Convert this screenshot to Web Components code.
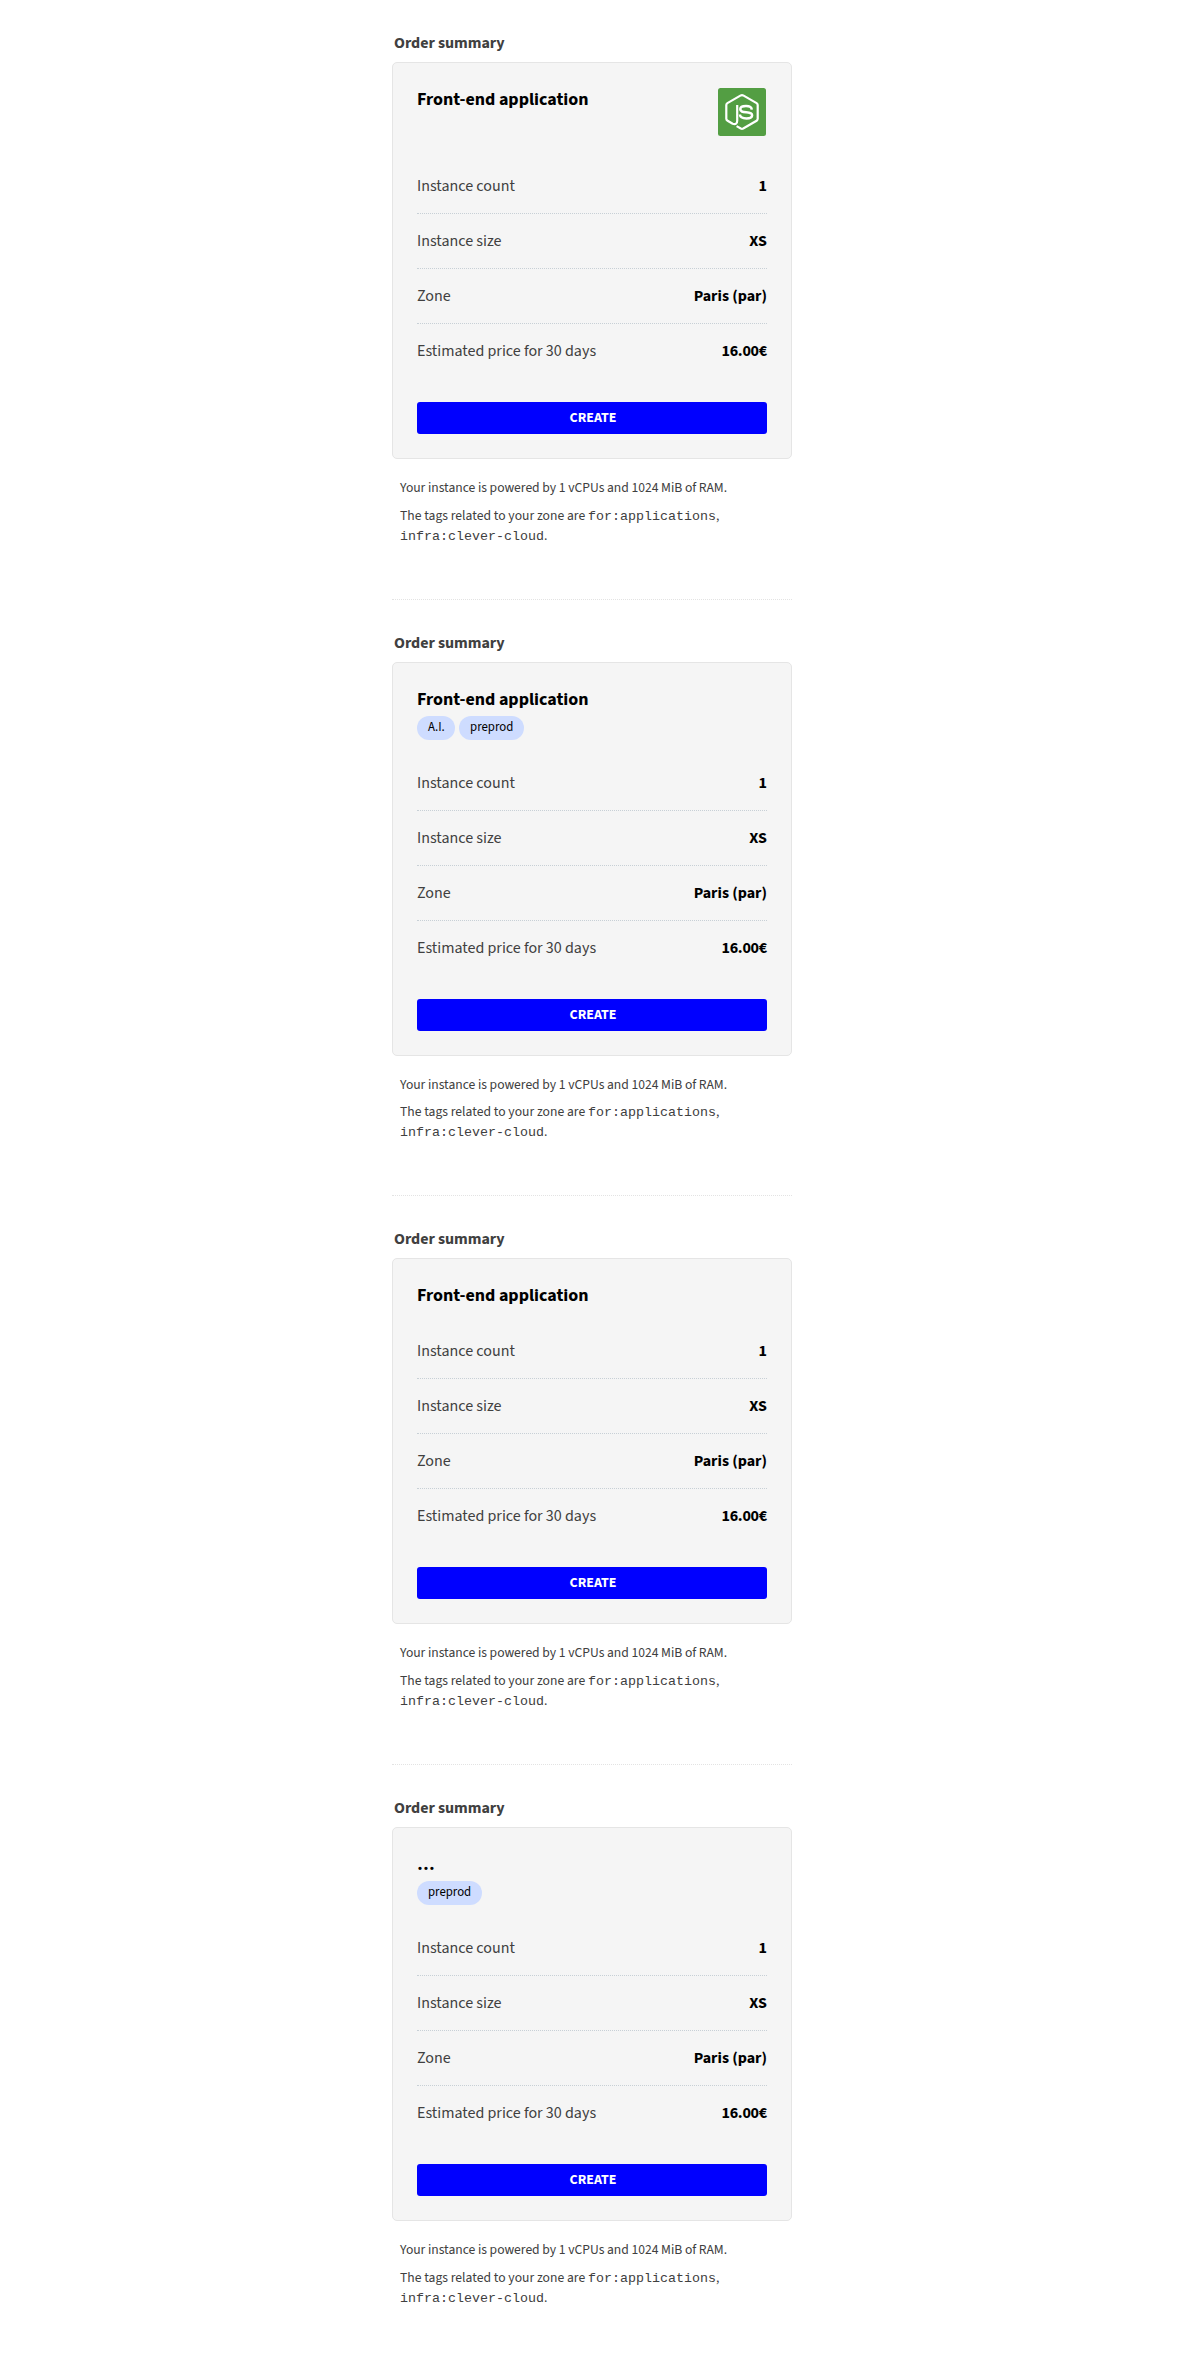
<!DOCTYPE html>
<html lang="en">
<head>
<meta charset="utf-8">
<title>Order summary</title>
<style>
body{margin:0;background:#fff;font-family:"Source Sans 3","Noto Sans CJK SC",sans-serif;color:#404040;font-size:16px}
main{display:block;width:400px;margin:0 auto}
</style>
</head>
<body>
<main>
<order-summary name="Front-end application" logo style="--card:397px;--head:48px"></order-summary>
<order-summary name="Front-end application" tags="A.I.,preprod" style="--card:394px;--head:45px;--notes:139px;--gap:7px"></order-summary>
<order-summary name="Front-end application" style="--card:366px;--head:17px"></order-summary>
<order-summary name="…" tags="preprod" style="--card:394px;--head:45px"></order-summary>
</main>
<script>
class NodeLogo extends HTMLElement{
  constructor(){
    super();
    this.attachShadow({mode:'open'}).innerHTML=`<style>:host{display:block;width:48px;height:48px;margin-right:1px}svg{display:block}</style>
<svg width="48" height="48" viewBox="0 0 48 48" fill="none" stroke="#fff" stroke-width="2.2" stroke-linejoin="round">
<rect width="48" height="48" rx="2.5" fill="#539e43" stroke="none"/>
<path d="M19.2 17V32.8Q19.2 36.9 14.7 35.8L9.6 32.8Q8.3 32 8.3 30.8V17Q8.3 15.8 9.4 15.1L22.8 7.4Q24 6.8 25.2 7.4L38.6 15.1Q39.7 15.8 39.7 17V30.8Q39.7 32 38.6 32.8L25.2 40.5Q24 41.1 22.8 40.5L18.6 38.1"/>
<path stroke-width="2.5" d="M33.8 21.7C33.6 19 31.7 18.100 28 18.100C24.400 18.100 22.300 19.200 22.300 21.200C22.300 23.600 24.500 23.900 28.200 24.300C32.700 24.700 34.100 25.400 34.100 27.200C34.100 29.600 31.900 30.400 28.500 30.400C24.300 30.400 22.100 29.400 21.900 26.500"/>
</svg>`;
  }
}
class OrderTag extends HTMLElement{
  constructor(){
    super();
    this.attachShadow({mode:'open'}).innerHTML=`<style>:host{display:block;box-sizing:border-box;height:24px;border-radius:12px;padding:0 10.4px 0 11px;background:#cedcff;color:#000;font-size:12.8px;line-height:23px}</style><slot></slot>`;
  }
}
class OrderRow extends HTMLElement{
  constructor(){
    super();
    this.attachShadow({mode:'open'}).innerHTML=`<style>:host{display:flex;justify-content:space-between;align-items:center;box-sizing:border-box;height:55px;line-height:24px;border-bottom:1px dotted #c8d0d6;color:#404040;font-size:16px}
:host(:last-of-type){border-bottom-color:transparent}
b{color:#000;font-weight:700}</style><slot></slot><b><slot name="value"></slot></b>`;
  }
}
class OrderSummary extends HTMLElement{
  connectedCallback(){
    const tags=(this.getAttribute('tags')||'').split(',').filter(Boolean);
    this.attachShadow({mode:'open'}).innerHTML=`<style>
:host{display:block}
:host(:not(:last-of-type)){border-bottom:1px dotted #e3e3e3}
h2{margin:0;padding:31px 0 0 2px;height:31px;line-height:24px;font-size:16px;font-weight:700;letter-spacing:-.04px}
.card{box-sizing:border-box;height:var(--card);background:#f5f5f5;border:1px solid #e5e5e5;border-radius:5px;padding:25px 24px 24px;display:flex;flex-direction:column}
header{height:var(--head);display:flex;justify-content:space-between}
h3{margin:0;font-size:18px;line-height:24px;color:#000;font-weight:700;letter-spacing:-.02px}
.tags{display:flex;gap:4px;margin-top:4px}
.rows{padding-top:23px}
.price{letter-spacing:-.25px}
button{display:block;width:100%;height:32px;margin-top:auto;border:0;border-radius:3px;background:#00f;color:#fff;font:700 14px/30px "Source Sans 3","Noto Sans CJK SC",sans-serif;text-transform:uppercase;padding:0 0 0 2px}
.notes{box-sizing:border-box;height:var(--notes,140px);padding:19px 8px 0;font-size:13.6px;line-height:20px}
p{margin:0 0 var(--gap,8px)}
.power{letter-spacing:-.025px}
.zone{letter-spacing:.02px}
code{font:13.333px/1 "Liberation Mono",monospace;letter-spacing:0}
</style>
<h2>Order summary</h2>
<section class="card">
<header><div><h3>${this.getAttribute('name')}</h3>${tags.length?`<div class="tags">${tags.map(t=>`<order-tag>${t}</order-tag>`).join('')}</div>`:''}</div>${this.hasAttribute('logo')?'<node-logo></node-logo>':''}</header>
<div class="rows">
<order-row>Instance count<span slot="value">1</span></order-row>
<order-row>Instance size<span slot="value">XS</span></order-row>
<order-row>Zone<span slot="value">Paris (par)</span></order-row>
<order-row>Estimated price for 30 days<span slot="value" class="price">16.00€</span></order-row>
</div>
<button>Create</button>
</section>
<div class="notes"><p class="power">Your instance is powered by 1 vCPUs and 1024 MiB of RAM.</p><p class="zone">The tags related to your zone are <code>for:applications</code>, <code>infra:clever-cloud</code>.</p></div>`;
  }
}
customElements.define('node-logo',NodeLogo);
customElements.define('order-tag',OrderTag);
customElements.define('order-row',OrderRow);
customElements.define('order-summary',OrderSummary);
</script>
</body>
</html>
